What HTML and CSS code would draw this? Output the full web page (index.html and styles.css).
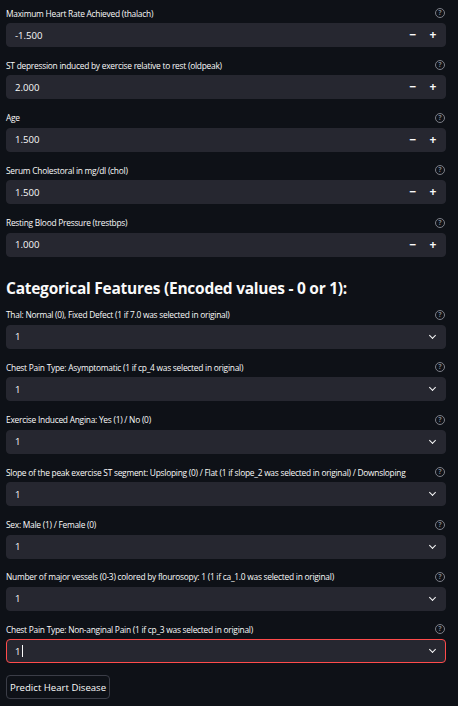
FILE: index.html
```html
<!DOCTYPE html>
<html>
<head>
<meta charset="utf-8">
<link rel="stylesheet" href="styles.css">
</head>
<body>
<main class="page">
  <div class="widget">
    <div class="label-row"><span class="label">Maximum Heart Rate Achieved (thalach)</span><span class="help"></span></div>
    <div class="field"><span class="value">-1.500</span><span class="step">−</span><span class="step">+</span></div>
  </div>
  <div class="widget">
    <div class="label-row"><span class="label">ST depression induced by exercise relative to rest (oldpeak)</span><span class="help"></span></div>
    <div class="field"><span class="value">2.000</span><span class="step">−</span><span class="step">+</span></div>
  </div>
  <div class="widget">
    <div class="label-row"><span class="label">Age</span><span class="help"></span></div>
    <div class="field"><span class="value">1.500</span><span class="step">−</span><span class="step">+</span></div>
  </div>
  <div class="widget">
    <div class="label-row"><span class="label">Serum Cholestoral in mg/dl (chol)</span><span class="help"></span></div>
    <div class="field"><span class="value">1.500</span><span class="step">−</span><span class="step">+</span></div>
  </div>
  <div class="widget">
    <div class="label-row"><span class="label">Resting Blood Pressure (trestbps)</span><span class="help"></span></div>
    <div class="field"><span class="value">1.000</span><span class="step">−</span><span class="step">+</span></div>
  </div>

  <h3 class="heading">Categorical Features (Encoded values - 0 or 1):</h3>

  <div class="widget">
    <div class="label-row"><span class="label">Thal: Normal (0), Fixed Defect (1 if 7.0 was selected in original)</span><span class="help"></span></div>
    <div class="field"><span class="value">1</span><span class="chev"></span></div>
  </div>
  <div class="widget">
    <div class="label-row"><span class="label">Chest Pain Type: Asymptomatic (1 if cp_4 was selected in original)</span><span class="help"></span></div>
    <div class="field"><span class="value">1</span><span class="chev"></span></div>
  </div>
  <div class="widget">
    <div class="label-row"><span class="label">Exercise Induced Angina: Yes (1) / No (0)</span><span class="help"></span></div>
    <div class="field"><span class="value">1</span><span class="chev"></span></div>
  </div>
  <div class="widget">
    <div class="label-row"><span class="label">Slope of the peak exercise ST segment: Upsloping (0) / Flat (1 if slope_2 was selected in original) / Downsloping</span><span class="help"></span></div>
    <div class="field"><span class="value">1</span><span class="chev"></span></div>
  </div>
  <div class="widget">
    <div class="label-row"><span class="label">Sex: Male (1) / Female (0)</span><span class="help"></span></div>
    <div class="field"><span class="value">1</span><span class="chev"></span></div>
  </div>
  <div class="widget">
    <div class="label-row"><span class="label">Number of major vessels (0-3) colored by flourosopy: 1 (1 if ca_1.0 was selected in original)</span><span class="help"></span></div>
    <div class="field"><span class="value">1</span><span class="chev"></span></div>
  </div>
  <div class="widget">
    <div class="label-row"><span class="label">Chest Pain Type: Non-anginal Pain (1 if cp_3 was selected in original)</span><span class="help"></span></div>
    <div class="field focused"><span class="value">1<span class="caret"></span></span><span class="chev"></span></div>
  </div>

  <button class="btn">Predict Heart Disease</button>
</main>
</body>
</html>
```

FILE: styles.css
```css
html, body {
  margin: 0;
  padding: 0;
  background: #0e1117;
}
body {
  color: #fafafa;
  font-family: "Open Sans", "Liberation Sans", sans-serif;
}
.page {
  padding: 5px 12px 0 6px;
  display: flex;
  flex-direction: column;
}
.widget {
  display: flex;
  flex-direction: column;
  margin-bottom: 10.4px;
}
.label-row {
  height: 16px;
  margin-bottom: 2px;
  display: flex;
  align-items: center;
  justify-content: space-between;
}
.label {
  font-size: 8.4px;
  font-weight: 500;
  letter-spacing: -0.25px;
  white-space: nowrap;
}
.help {
  width: 8px;
  height: 8px;
  border: 1px solid #7d7f88;
  border-radius: 50%;
  margin-right: 1px;
  position: relative;
  flex: none;
}
.help::after {
  content: "?";
  position: absolute;
  left: 0;
  right: 0;
  top: -1px;
  text-align: center;
  font-size: 7px;
  line-height: 10px;
  font-weight: 700;
  color: #7d7f88;
}
.field {
  height: 24px;
  background: #262730;
  border-radius: 4px;
  border: 1px solid #262730;
  box-sizing: border-box;
  display: flex;
  align-items: center;
  padding: 0 2px 0 8px;
}
.field.focused {
  border-color: #ff4b4b;
}
.value {
  flex: 1;
  font-size: 9.6px;
  display: flex;
  align-items: center;
}
.step {
  width: 20px;
  text-align: center;
  font-size: 12px;
  font-weight: 700;
  line-height: 1;
}
.chev {
  width: 4px;
  height: 4px;
  border-right: 1.5px solid #fafafa;
  border-bottom: 1.5px solid #fafafa;
  transform: rotate(45deg);
  margin: 0 8px 3px 0;
}
.caret {
  display: inline-block;
  width: 1px;
  height: 12px;
  background: #fafafa;
  margin-left: 1px;
}
.heading {
  margin: 0;
  padding: 11px 0 9px 0;
  font-size: 15.5px;
  line-height: 20px;
  font-weight: 700;
  letter-spacing: -0.25px;
}
.btn {
  align-self: flex-start;
  margin-top: 1.5px;
  height: 24px;
  width: 104px;
  background: #0e1117;
  color: #fafafa;
  border: 1px solid #3b3d47;
  border-radius: 4px;
  font-family: inherit;
  font-size: 9.6px;
  padding: 0;
}
```
